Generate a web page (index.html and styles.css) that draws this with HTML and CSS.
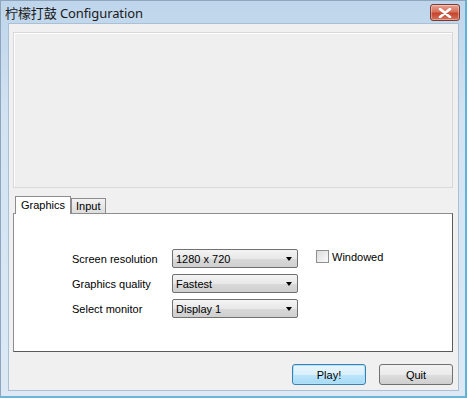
FILE: index.html
```html
<!DOCTYPE html>
<html lang="zh">
<head>
  <meta charset="UTF-8">
  <title>柠檬打鼓 Configuration</title>
  <link rel="stylesheet" href="styles.css">
</head>
<body>

<div class="window">
  <div class="titlebar">
    <span class="title">柠檬打鼓 Configuration</span>
    <div class="close">
      <svg width="14" height="10" viewBox="0 0 14 10">
        <path d="M2 1 L12 9 M12 1 L2 9" stroke="#fff" stroke-width="2.6" stroke-linecap="round"/>
      </svg>
    </div>
  </div>

  <div class="client">
    <div class="preview"></div>

    <div class="tabs">
      <div class="tab active">Graphics</div>
      <div class="tab">Input</div>
    </div>

    <div class="pane">
      <div class="rows">
        <div class="row">
          <label>Screen resolution</label>
          <div class="combo">1280 x 720<span class="arrow"></span></div>
          <div class="check"><span class="box"></span>Windowed</div>
        </div>
        <div class="row">
          <label>Graphics quality</label>
          <div class="combo">Fastest<span class="arrow"></span></div>
        </div>
        <div class="row">
          <label>Select monitor</label>
          <div class="combo">Display 1<span class="arrow"></span></div>
        </div>
      </div>
    </div>

    <div class="buttons">
      <button class="default">Play!</button>
      <button>Quit</button>
    </div>
  </div>
</div>

</body>
</html>
```

FILE: styles.css
```css
* {
  box-sizing: border-box;
}

body {
  margin: 0;
  font-family: "Liberation Sans", Arial, "Noto Sans CJK SC", sans-serif;
  font-size: 11px;
  color: #000;
}

.window {
  width: 467px;
  height: 398px;
  display: flex;
  flex-direction: column;
  background: linear-gradient(#bed5eb, #d3e3f2 30%, #dce9f5);
  border: 1px solid #8ea6bd;
  border-right: 2px solid #5fb3d6;
  border-bottom: 2px solid #6bb6d6;
}

.titlebar {
  flex-shrink: 0;
  height: 22px;
  display: flex;
  align-items: center;
  justify-content: space-between;
  padding: 0 5px 0 4px;
}

.title {
  font-family: "Noto Sans", "Noto Sans CJK SC", sans-serif;
  font-size: 13px;
  color: #1b1b1b;
  letter-spacing: -0.1px;
}

.close {
  width: 30px;
  height: 17px;
  margin-top: 1px;
  border: 1px solid #7b3a32;
  border-radius: 3px;
  background: linear-gradient(#e8a493, #d6715c 45%, #c5452c 55%, #d3745c);
  display: flex;
  align-items: center;
  justify-content: center;
  box-shadow: inset 0 0 0 1px rgba(255, 255, 255, 0.35);
}

.client {
  flex: 1;
  margin: 0 6px 5px 7px;
  background: #f0f0f0;
  border: 1px solid #a9c0d6;
  display: flex;
  flex-direction: column;
  padding: 8px 5px 0 4px;
}

.preview {
  flex-shrink: 0;
  height: 156px;
  border: 1px solid #d8d8d8;
  box-shadow: inset 1px 1px 0 #fff;
  background: #efefef;
}

.tabs {
  flex-shrink: 0;
  display: flex;
  align-items: flex-end;
  margin-top: 7px;
  padding-left: 2px;
  height: 18px;
}

.tab {
  height: 15px;
  padding: 0 4px;
  line-height: 15px;
  border: 1px solid #8d8d8d;
  border-bottom: none;
  background: linear-gradient(#f2f2f2, #dddddd);
  position: relative;
}

.tab.active {
  height: 18px;
  line-height: 17px;
  background: #fff;
  margin-bottom: -1px;
  z-index: 1;
  padding: 0 5px;
}

.pane {
  flex-shrink: 0;
  height: 139px;
  background: #fff;
  border: 1px solid #8d8d8d;
  border-right-color: #5a5a5a;
  border-bottom-color: #5a5a5a;
  padding: 35px 0 0 58px;
}

.rows {
  display: flex;
  flex-direction: column;
  gap: 6px;
}

.row {
  display: flex;
  align-items: center;
  height: 19px;
}

.row label {
  width: 100px;
}

.combo {
  width: 126px;
  height: 19px;
  border: 1px solid #707070;
  border-radius: 2px;
  background: linear-gradient(#f4f4f4, #e8e8e8 50%, #d9d9d9 51%, #cfcfcf);
  padding-left: 3px;
  display: flex;
  justify-content: space-between;
  align-items: center;
}

.arrow {
  width: 0;
  height: 0;
  margin-right: 5px;
  border-left: 3.5px solid transparent;
  border-right: 3.5px solid transparent;
  border-top: 4px solid #000;
}

.check {
  display: flex;
  align-items: center;
  margin-left: 18px;
  margin-top: -4px;
}

.box {
  width: 13px;
  height: 13px;
  border: 1px solid #8e8f8f;
  background: linear-gradient(135deg, #dcdcdc, #fbfbfb);
  margin-right: 3px;
}

.buttons {
  flex-shrink: 0;
  display: flex;
  justify-content: flex-end;
  gap: 13px;
  margin-top: 12px;
}

button {
  width: 74px;
  height: 21px;
  font-family: "Liberation Sans", Arial, sans-serif;
  font-size: 11px;
  border: 1px solid #707070;
  border-radius: 3px;
  background: linear-gradient(#f2f2f2, #ebebeb 50%, #dddddd 51%, #cfcfcf);
  padding: 0;
}

button.default {
  border-color: #3c7fb1;
  box-shadow: inset 0 0 0 1px #aee3fb;
  background: linear-gradient(#eaf6fd, #d9f0fc 50%, #bee6fd 51%, #a7d9f5);
}
```
